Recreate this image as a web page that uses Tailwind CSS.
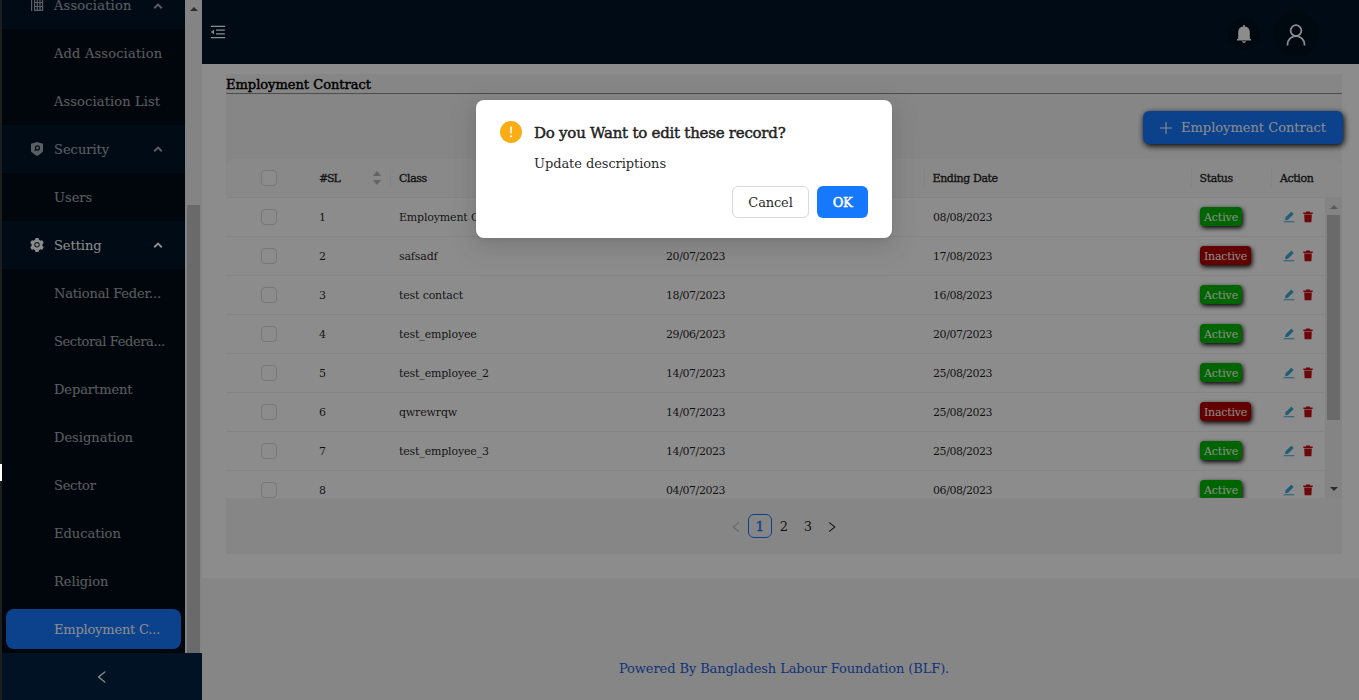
<!DOCTYPE html>
<html lang="en">
<head>
<meta charset="utf-8">
<title>Employment Contract</title>
<script src="https://cdn.jsdelivr.net/npm/@tailwindcss/browser@4"></script>
</head>
<body class="relative h-[700px] w-[1359px] overflow-hidden bg-[#33373b] font-['DejaVu_Serif',serif] text-[13px] text-black/88">
<svg class="hidden">
  <symbol id="up" viewBox="0 0 10 6"><path d="M1.200 5.200 5 1.600 8.800 5.200" fill="none" stroke="currentColor" stroke-width="2"/></symbol>
  <symbol id="left" viewBox="64 64 896 896"><path d="M724 218.3V141c0-6.7-7.7-10.4-12.9-6.3L260.3 486.8a31.86 31.86 0 000 50.3l450.8 352.1c5.3 4.1 12.9.4 12.9-6.3v-77.3c0-4.9-2.3-9.6-6.1-12.6l-360-281 360-281.1c3.8-3 6.1-7.7 6.1-12.6z" fill="currentColor"/></symbol>
  <symbol id="right" viewBox="64 64 896 896"><path d="M765.7 486.8L314.9 134.7A7.97 7.97 0 00302 141v77.3c0 4.9 2.3 9.6 6.1 12.6l360 281.1-360 281.1c-3.9 3-6.1 7.7-6.1 12.6V883c0 6.7 7.7 10.4 12.9 6.3l450.8-352.1a31.96 31.96 0 000-50.4z" fill="currentColor"/></symbol>
  <symbol id="del" viewBox="0 0 10 12"><path d="M3 .6h4v1h2.700v1.500H.3V1.600H3ZM1.200 3.600h7.600L8.400 11.200H1.600Z" fill="currentColor"/></symbol>
  <symbol id="edit" viewBox="64 64 896 896"><path d="M880 836H144c-17.7 0-32 14.3-32 32v36c0 4.4 3.6 8 8 8h784c4.4 0 8-3.6 8-8v-36c0-17.7-14.3-32-32-32zm-622.3-84c2 0 4-.2 6-.5L431.9 722c2-.4 3.9-1.3 5.3-2.8l423.9-423.9a9.96 9.96 0 000-14.1L694.9 114.9c-1.9-1.9-4.4-2.9-7.1-2.9s-5.2 1-7.1 2.9L256.8 538.8c-1.5 1.5-2.4 3.3-2.8 5.3l-29.5 168.2a33.5 33.5 0 009.4 29.8c6.6 6.4 14.9 9.9 23.8 9.9z" fill="currentColor"/></symbol>
</svg>

<div class="flex h-full pl-0.5">
  <!-- Sidebar -->
  <aside class="flex w-[200px] shrink-0 flex-col">
    <div class="flex h-[653px] overflow-hidden bg-[#001529]">
      <nav class="w-[183px] text-white/65">
        <div class="flex h-[29px] items-center pl-7 pr-[22px] pb-[18px]">
          <svg class="h-[14px] w-[14px]" viewBox="0 0 14 14" fill="none" stroke="currentColor" stroke-width="1.2"><path d="M1.6 0v12M4.6 0v11.4h8V0M7.3 0v11.4M10 0v11.4M4.6 3.5h8M4.6 7.5h8"/></svg>
          <span class="ml-2.5 grow leading-[11px] tracking-[.2px]">Association</span>
          <svg class="h-1.5 w-2.5"><use href="#up"/></svg>
        </div>
        <div class="bg-[#000c17] pl-[52px]">
          <div class="h-12 leading-[50px] tracking-[.18px]">Add Association</div>
          <div class="h-12 leading-[50px] tracking-[.13px]">Association List</div>
        </div>
        <div class="flex h-12 items-center pl-7 pr-[22px]">
          <svg class="h-[14px] w-[14px]" viewBox="0 0 14 14"><path d="M7 0 13 1.8V9.2Q12.6 10.4 7 14 1.4 10.4 1 9.2V1.8Z" fill="currentColor"/><circle cx="7.5" cy="5.9" r="2" fill="none" stroke="#001529" stroke-width="1.1"/><path d="M6.1 7.3 4.6 8.8" stroke="#001529" stroke-width="1.1"/></svg>
          <span class="ml-2.5 mt-0.5 grow">Security</span>
          <svg class="h-1.5 w-2.5"><use href="#up"/></svg>
        </div>
        <div class="h-12 bg-[#000c17] pl-[52px] leading-[50px]">Users</div>
        <div class="flex h-12 items-center pl-7 pr-[22px] text-white">
          <svg class="h-[14px] w-[14px]" viewBox="64 64 896 896"><path fill="currentColor" d="M512.500 390.600c-29.900 0-57.900 11.600-79.100 32.800-21.100 21.200-32.800 49.200-32.800 79.100 0 29.900 11.700 57.900 32.800 79.100 21.200 21.100 49.200 32.800 79.100 32.800 29.900 0 57.900-11.700 79.100-32.800 21.100-21.200 32.800-49.200 32.800-79.100 0-29.900-11.700-57.900-32.800-79.100a110.960 110.960 0 00-79.100-32.800zm412.300 235.500l-65.400-55.900c3.100-19 4.700-38.400 4.700-57.700s-1.600-38.800-4.700-57.700l65.400-55.900a32.030 32.030 0 009.300-35.200l-.9-2.600a442.500 442.500 0 00-79.600-137.700l-1.800-2.100a32.120 32.120 0 00-35.100-9.500l-81.200 28.900c-30-24.600-63.400-44-99.600-57.500l-15.700-84.900a32.050 32.050 0 00-25.800-25.700l-2.700-.5c-52-9.400-106.800-9.400-158.800 0l-2.700.5a32.050 32.050 0 00-25.800 25.700l-15.800 85.300a353.440 353.440 0 00-98.900 57.300l-81.800-29.100a32 32 0 00-35.100 9.500l-1.800 2.100a445.930 445.930 0 00-79.600 137.700l-.9 2.600c-4.500 12.500-.8 26.500 9.300 35.200l66.200 56.500c-3.100 18.800-4.600 38-4.600 57 0 19.200 1.500 38.400 4.600 57l-66 56.500a32.030 32.030 0 00-9.300 35.200l.9 2.600c18.100 50.300 44.800 96.800 79.600 137.700l1.800 2.100a32.120 32.120 0 0035.100 9.500l81.800-29.100c29.800 24.500 63 43.900 98.900 57.300l15.800 85.300a32.050 32.050 0 0025.800 25.700l2.700.5a448.270 448.270 0 00158.800 0l2.700-.5a32.050 32.050 0 0025.800-25.700l15.700-84.900c36.200-13.600 69.600-32.900 99.600-57.500l81.200 28.900a32 32 0 0035.100-9.500l1.800-2.100c34.800-41.100 61.500-87.400 79.600-137.700l.9-2.600c4.300-12.400.6-26.300-9.500-35zm-412.300 52.200c-97.100 0-175.800-78.700-175.800-175.800s78.700-175.800 175.800-175.800 175.800 78.700 175.800 175.800-78.700 175.800-175.800 175.800z"/></svg>
          <span class="ml-2.5 mt-0.5 grow tracking-[-.05px]">Setting</span>
          <svg class="h-1.5 w-2.5"><use href="#up"/></svg>
        </div>
        <div class="bg-[#000c17] leading-[50px]">
          <div class="h-12 pl-[52px] tracking-[-.18px]">National Feder...</div>
          <div class="h-12 pl-[52px] tracking-[-.38px]">Sectoral Federa...</div>
          <div class="h-12 pl-[52px] tracking-[-.08px]">Department</div>
          <div class="h-12 pl-[52px]">Designation</div>
          <div class="h-12 pl-[52px] tracking-[-.25px]">Sector</div>
          <div class="h-12 pl-[52px]">Education</div>
          <div class="h-12 pl-[52px]">Religion</div>
          <div class="px-1 py-1"><div class="h-10 rounded-lg bg-[#1677ff] pl-12 leading-[42px] tracking-[-.2px] text-white">Employment C...</div></div>
        </div>
      </nav>
      <div class="flex w-[17px] flex-col items-center bg-[#f1f1f1]">
        <div class="mt-[7px] border-x-4 border-b-4 border-x-transparent border-b-[#505050]"></div>
        <div class="mt-[194px] w-[13px] grow bg-[#c1c1c1]"></div>
      </div>
    </div>
    <div class="flex h-[47px] items-center justify-center bg-[#002140] text-white"><svg class="h-3.5 w-3.5"><use href="#left"/></svg></div>
  </aside>

  <div class="flex grow flex-col bg-[#f5f5f5]">
    <header class="flex h-16 items-center bg-[#001529] pl-2 pr-10 text-white">
      <svg class="h-4 w-4" viewBox="64 64 896 896" fill="currentColor"><path d="M408 442h480c4.400 0 8-3.600 8-8v-56c0-4.400-3.600-8-8-8H408c-4.400 0-8 3.600-8 8v56c0 4.400 3.600 8 8 8zm-8 204c0 4.400 3.600 8 8 8h480c4.400 0 8-3.600 8-8v-56c0-4.400-3.600-8-8-8H408c-4.400 0-8 3.600-8 8v56zm504-486H120c-4.400 0-8 3.600-8 8v56c0 4.400 3.600 8 8 8h784c4.400 0 8-3.600 8-8v-56c0-4.400-3.600-8-8-8zm0 632H120c-4.400 0-8 3.600-8 8v56c0 4.400 3.600 8 8 8h784c4.400 0 8-3.600 8-8v-56c0-4.400-3.600-8-8-8zM115.400 518.900L271.700 642c5.800 4.600 14.400.5 14.400-6.900V388.900c0-7.400-8.500-11.500-14.400-6.900L115.400 505.100a8.740 8.740 0 000 13.800z"/></svg>
      <div class="grow"></div>
      <div class="mt-1 flex h-8 w-8 items-center justify-center rounded-full bg-[#000f1e]">
        <svg class="h-[18px] w-4" viewBox="0 0 16 18" fill="currentColor"><path d="M7.200 0h1.600v1.400C12 1.800 13.800 4 13.800 7v7H15v1.500H1V14h1.200V7c0-3 1.800-5.200 5-5.600ZM6 16.300h4Q9.700 18 8 18T6 16.300Z"/></svg>
      </div>
      <div class="ml-[13px] mt-1 flex h-[46px] w-[46px] items-center justify-center rounded-full bg-[#000f1e]">
        <svg class="mt-0.5 h-[22px] w-5" viewBox="0 0 20 22" fill="none" stroke="currentColor" stroke-width="1.800"><circle cx="10" cy="6.600" r="5.400"/><path d="M1.500 21.500v-1C1.500 16 5 12.200 10 12.200s8.500 3.800 8.500 8.300v1"/></svg>
      </div>
    </header>

    <main class="h-[514px] bg-white pl-6 pr-[17px] pt-[10px]">
      <div class="h-[480px] bg-[#f5f5f5]">
        <h1 class="h-5 border-b border-[#8a8a8a] leading-[21px] text-black [-webkit-text-stroke:.45px_black]">Employment Contract</h1>
        <div class="flex h-[65px] justify-end pt-[17px]">
          <button class="-mr-px flex h-[33px] w-[200px] items-center rounded-md bg-[#1677ff] pl-4 text-white shadow-[1px_2px_6px_#000]">
            <svg class="h-3.5 w-3.5" viewBox="0 0 14 14" stroke="currentColor" stroke-width="1.100"><path d="M7 1v12M1 7h12"/></svg>
            <span class="ml-2 whitespace-nowrap">Employment Contract</span>
          </button>
        </div>

        <!-- Table -->
        <div class="flex h-[39px] items-center rounded-t-lg border-b border-[#f0f0f0] bg-[#fafafa] text-[11px] tracking-[-.4px] [-webkit-text-stroke:.35px_#1f1f1f]">
          <div class="flex w-[85px] justify-center"><i class="h-4 w-4 rounded border border-[#d9d9d9] bg-white"></i></div>
          <div class="flex h-[18px] w-20 items-center justify-between border-r border-[#f0f0f0] pl-2 pr-[9px]"><span class="mt-0.5 tracking-[-1.1px]">#SL</span>
            <svg class="h-[14px] w-2" viewBox="0 0 8 14" fill="#b5b5b5" stroke="none"><path d="M4 0 8 5H0ZM4 14 8 9H0Z"/></svg></div>
          <div class="h-[18px] w-[267px] border-r border-[#f0f0f0] pl-2 leading-[20px]">Class</div>
          <div class="h-[18px] w-[267px] border-r border-[#f0f0f0] pl-2 leading-[20px]">Starting Date</div>
          <div class="h-[18px] w-[267px] border-r border-[#f0f0f0] pl-[7.500px] leading-[20px]">Ending Date</div>
          <div class="h-[18px] w-20 border-r border-[#f0f0f0] pl-[7.500px] leading-[20px]">Status</div>
          <div class="mt-0.5 pl-2">Action</div>
        </div>
        <div class="flex h-[300px] overflow-hidden bg-white">
          <div id="rows" class="w-[1099px] shrink-0 text-[11px]"></div>
          <div class="flex w-[17px] flex-col items-center bg-[#f1f1f1]">
            <div class="mt-[7px] border-x-4 border-b-4 border-x-transparent border-b-[#a3a3a3]"></div>
            <div class="mt-[6px] h-[205px] w-[13px] bg-[#c1c1c1]"></div>
            <div class="mt-[67px] border-x-4 border-t-4 border-x-transparent border-t-[#505050]"></div>
          </div>
        </div>

        <div class="flex h-14 items-center justify-center">
          <span class="flex w-6 justify-center text-black/25"><svg class="mt-0.5 h-3 w-3"><use href="#left"/></svg></span>
          <span class="h-6 w-6 rounded-md border border-[#1677ff] text-center leading-[24px] text-[#1677ff] [-webkit-text-stroke:.45px_#1677ff]">1</span>
          <span class="mt-0.5 w-6 text-center">2</span>
          <span class="mt-0.5 w-6 text-center">3</span>
          <span class="flex w-6 justify-center"><svg class="mt-0.5 h-3 w-3"><use href="#right"/></svg></span>
        </div>
      </div>
    </main>
    <footer class="pl-[417px] pt-20 leading-[22px] tracking-[-.1px] text-[#1d5fd6]">Powered By Bangladesh Labour Foundation (BLF).</footer>
  </div>
</div>

<!-- Mask and confirm dialog -->
<div class="absolute inset-0 bg-black/45"></div>
<div class="absolute left-0 top-[464px] h-[17px] w-0.5 bg-white"></div>
<div class="absolute left-[476px] top-[100px] flex h-[138px] w-[416px] flex-col rounded-lg bg-white px-6 py-5 shadow-[0_6px_16px_0_rgba(0,0,0,.08),0_3px_6px_-4px_rgba(0,0,0,.12),0_9px_28px_8px_rgba(0,0,0,.05)]">
  <div class="flex">
    <svg class="mt-px h-[22px] w-[22px]" viewBox="64 64 896 896" fill="#faad14"><path d="M512 64C264.600 64 64 264.600 64 512s200.600 448 448 448 448-200.600 448-448S759.400 64 512 64zm-32 232c0-4.400 3.600-8 8-8h48c4.400 0 8 3.600 8 8v272c0 4.400-3.600 8-8 8h-48c-4.400 0-8-3.600-8-8V296zm32 440a48.010 48.010 0 010-96 48.010 48.010 0 010 96z"/></svg>
    <div class="ml-3">
      <div class="h-[25px] text-[15px] leading-[26px] tracking-[-.24px] [-webkit-text-stroke:.5px_#1f1f1f]">Do you Want to edit these record?</div>
      <div class="mt-[7px] h-[22px] leading-[24px] tracking-[-.07px]">Update descriptions</div>
    </div>
  </div>
  <div class="mt-3 flex justify-end gap-2">
    <button class="h-8 w-[77px] rounded-md border border-[#d9d9d9] bg-white pt-0.5 tracking-[-.15px]">Cancel</button>
    <button class="h-8 w-[51px] rounded-md bg-[#1677ff] pt-0.5 tracking-[-.5px] text-white [-webkit-text-stroke:.5px_white]">OK</button>
  </div>
</div>

<script>
const data = [
  ['Employment Contract', '12/07/2023', '08/08/2023', 1],
  ['safsadf', '20/07/2023', '17/08/2023', 0],
  ['test contact', '18/07/2023', '16/08/2023', 1],
  ['test_employee', '29/06/2023', '20/07/2023', 1],
  ['test_employee_2', '14/07/2023', '25/08/2023', 1],
  ['qwrewrqw', '14/07/2023', '25/08/2023', 0],
  ['test_employee_3', '14/07/2023', '25/08/2023', 1],
  ['', '04/07/2023', '06/08/2023', 1],
];
document.getElementById('rows').innerHTML = data.map((r, i) => `
  <div class="flex h-[39px] items-center border-b border-[#f0f0f0]">
    <div class="flex w-[85px] justify-center"><i class="h-4 w-4 rounded border border-[#d9d9d9] bg-white"></i></div>
    <div class="w-20 pl-2 pt-0.5">${i + 1}</div>
    <div class="w-[267px] pl-2 pt-0.5 tracking-[-.17px]">${r[0]}</div>
    <div class="w-[267px] pl-2 pt-0.5 tracking-[-.42px]">${r[1]}</div>
    <div class="w-[267px] pl-2 pt-0.5 tracking-[-.42px]">${r[2]}</div>
    <div class="w-20 pb-px pl-2">${r[3]
      ? '<span class="block h-[19px] w-[42px] rounded bg-[#00b900] text-center leading-[21px] tracking-[-.1px] text-white shadow-[1px_2px_5px_#000]">Active</span>'
      : '<span class="block h-[19px] w-[51px] rounded bg-[#b20000] text-center leading-[21px] tracking-[-.2px] text-white shadow-[1px_2px_5px_#000]">Inactive</span>'}</div>
    <div class="flex items-center gap-[7.500px] pl-[11px]"><svg class="h-3 w-3 text-[#3fa9d8]"><use href="#edit"/></svg><svg class="h-3 w-2.5 text-[#c90d12]"><use href="#del"/></svg></div>
  </div>`).join('');
</script>
</body>
</html>
